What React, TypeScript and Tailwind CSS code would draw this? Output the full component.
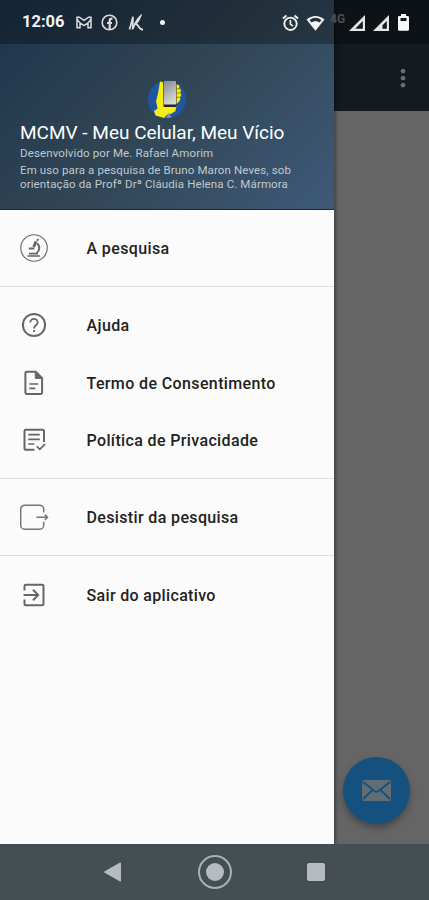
import type { ReactNode } from 'react';
import { MdMoreVert } from 'react-icons/md';

type MenuEntry = {
  label: string;
  icon: ReactNode;
  spacing: string;
};

const MicroscopeIcon = () => (
  <svg width="28" height="28" viewBox="0 0 28 28" fill="none" stroke="#666">
    <circle cx="14" cy="14" r="13.3" strokeWidth="1.1" />
    <path d="M7.5 22h12.5M9 19.6h9" strokeWidth="1.6" />
    <path d="M17 9.5c3.2 2.3 3 7.2-.5 9.7" strokeWidth="2" />
    <path d="M16 7.3l-2.3 5.7" strokeWidth="2.8" />
    <path d="M17 6.8L18.5 5M8.8 14.5h5.6" strokeWidth="1.8" />
  </svg>
);

const HelpIcon = () => (
  <svg width="28" height="28" viewBox="0 0 28 28" fill="none" stroke="#666" strokeWidth="1.8">
    <circle cx="14" cy="14" r="11.1" strokeWidth="2" />
    <path d="M10.3 11.6a3.7 3.7 0 1 1 7.4 0c0 2.7-3.7 2.7-3.7 5.8" />
    <path d="M14 18.9v2.2" />
  </svg>
);

const DocumentIcon = () => (
  <svg width="28" height="28" viewBox="0 0 28 28" fill="none" stroke="#666" strokeWidth="2">
    <path d="M6.3 2.8h9.5l6.3 6.3v14.3a1.5 1.5 0 0 1-1.5 1.5H6.9a1.5 1.5 0 0 1-1.5-1.5V4.3a1.5 1.5 0 0 1 1.5-1.5z" />
    <path d="M15.3 2.8v6.6h6.8z" fill="#666" strokeWidth="1" />
    <path d="M9.3 15h9M9.3 19.4h6" strokeWidth="1.7" />
  </svg>
);

const ChecklistIcon = () => (
  <svg width="28" height="28" viewBox="0 0 28 28" fill="none" stroke="#666" strokeWidth="2">
    <path d="M14.5 23.7H5.7a1.2 1.2 0 0 1-1.2-1.2V5a1.2 1.2 0 0 1 1.2-1.2h17.1A1.2 1.2 0 0 1 24 5v11" />
    <path d="M8.3 8.7h11.5M8.3 13.4h11.5M8.3 18h6" strokeWidth="1.7" />
    <path d="M16.8 20.3l3 3 5.2-5.2" strokeWidth="1.8" />
  </svg>
);

const LeaveIcon = () => (
  <svg width="29" height="28" viewBox="0 0 29 28" fill="none" stroke="#777" strokeWidth="1.5">
    <path d="M23.7 9.5V6.2a4 4 0 0 0-4-4H4.7a4 4 0 0 0-4 4v16a4 4 0 0 0 4 4h15a4 4 0 0 0 4-4v-3.4" />
    <path d="M16.4 14.3h11M24.8 11.6l2.7 2.7-2.7 2.7" />
  </svg>
);

const ExitIcon = () => (
  <svg width="28" height="28" viewBox="0 0 28 28" fill="none" stroke="#666" strokeWidth="2">
    <path d="M4.5 9.5V5a1.3 1.3 0 0 1 1.3-1.3h16.4A1.3 1.3 0 0 1 23.5 5v18a1.3 1.3 0 0 1-1.3 1.3H5.8A1.3 1.3 0 0 1 4.5 23v-4.5" />
    <path d="M3.5 14h14M13 8.8l5.2 5.2-5.2 5.2" />
  </svg>
);

const AppLogo = () => (
  <svg width="38" height="38" viewBox="0 0 38 38">
    <circle cx="19" cy="19.5" r="19" fill="#2055a4" />
    <path
      d="M12 1.5l3.4.7.3 16.5 2.3 6h8.5l2 1.5-1.2 5-4 2.5-4.3 1-3 3.3-8.5-2.5L6 31l3.6-2.5L8 21.5l2-8z"
      fill="#f5ee13"
    />
    <path d="M28 4l3.5 1.5-.5 3 2 1.3-.7 3 1 2-1.2 2.7.2 2.3-2.3 3L27 25z" fill="#f5ee13" />
    <path d="M28.5 8.8h4M28.5 13h4M28.5 17.3h4" stroke="#77781d" strokeWidth=".8" />
    <rect x="15.5" y="1" width="13" height="26" rx="1" fill="#24262a" />
    <rect x="16" y="1" width="12" height="23.5" fill="url(#phone)" />
    <path d="M18 38l3-5.5 2.4 5z" fill="#7996b9" />
    <defs>
      <linearGradient id="phone" x1="0" y1="0" x2="0.4" y2="1">
        <stop stopColor="#85888c" />
        <stop offset="1" stopColor="#d6d6d6" />
      </linearGradient>
    </defs>
  </svg>
);

const sections: MenuEntry[][] = [
  [{ label: 'A pesquisa', icon: <MicroscopeIcon />, spacing: 'tracking-[0.38px]' }],
  [
    { label: 'Ajuda', icon: <HelpIcon />, spacing: 'tracking-[0.38px]' },
    { label: 'Termo de Consentimento', icon: <DocumentIcon />, spacing: 'tracking-[0.38px]' },
    { label: 'Política de Privacidade', icon: <ChecklistIcon />, spacing: 'tracking-[0.36px]' },
  ],
  [{ label: 'Desistir da pesquisa', icon: <LeaveIcon />, spacing: 'tracking-[0.36px]' }],
  [{ label: 'Sair do aplicativo', icon: <ExitIcon />, spacing: 'tracking-[0.34px]' }],
];

function StatusBar() {
  return (
    <div className="absolute inset-x-0 top-0 z-20 flex h-11 items-center bg-black/30 pl-[22px] pr-[20px] pt-px text-white">
      <span className="w-[42px] text-[16.5px] font-bold leading-none text-gray-100">12:06</span>
      <svg className="ml-3" width="16" height="13" viewBox="0 0 16 13" fill="none" stroke="#ddd" strokeWidth="1.5">
        <path d="M1 11.8V1.2h2.3L8 4.4l4.7-3.2H15v10.6h-3V6.9L8 9.6 4 6.9v4.9zM1 3.2l3 3.7M15 3.2l-3 3.7" />
      </svg>
      <svg className="ml-[9px]" width="17" height="17" viewBox="0 0 17 17" fill="none" stroke="#ddd">
        <circle cx="8.5" cy="8.5" r="7.3" strokeWidth="1.6" />
        <path d="M8.7 15.5V6.6q0-2.2 2.8-2M6 9h5" strokeWidth="2.2" />
      </svg>
      <svg className="ml-[10px]" width="17" height="18" viewBox="0 0 17 18" fill="none" stroke="#ddd">
        <path d="M1.5 15.5L5 2.8L4.6 15.5" strokeWidth="1.7" />
        <path d="M4.7 14.5C7 9.5 9.5 5 12.3 2.5C11.3 5.5 10 7.5 7.6 10C10.6 9.5 10 15.3 15 15.8" strokeWidth="1.9" />
      </svg>
      <span className="ml-[15px] size-[5px] rounded-full bg-gray-100" />

      <svg className="ml-auto" width="17" height="18" viewBox="0 0 17 18" fill="none" stroke="#f3f3f3">
        <circle cx="8.5" cy="9.8" r="6.2" strokeWidth="1.9" />
        <path d="M1 4.5L4.5 1.6M16 4.5l-3.5-2.9" strokeWidth="2" />
        <path d="M8.4 6v4.1l2.6 2" strokeWidth="1.7" />
      </svg>
      <svg className="ml-[7px]" width="19" height="16" viewBox="0 0 19 16">
        <path d="M.5 4.6C6-.2 13-.2 18.5 4.6L9.5 15.7z" fill="#f5f5f5" />
        <path d="M3.5 5.1q6-4.5 12 0l-2 2.5q-4-3-8 0z" fill="#24313c" />
      </svg>
      <span className="ml-[5px] -mt-[7px] w-[17px] text-[12px] font-bold leading-none text-[#4b5053]">4G</span>
      <svg className="ml-[2px]" width="16" height="16" viewBox="0 0 16 16">
        <path d="M0 16L16 0v16z" fill="#e6e6e6" />
        <path d="M13.8 6v7.8H6.2z" fill="#101a22" />
      </svg>
      <svg className="ml-[8px]" width="16" height="16" viewBox="0 0 16 16">
        <path d="M0 16L16 0v16z" fill="#e6e6e6" />
        <path d="M13.8 6v7.8H9.5v-3.5z" fill="#101a22" />
      </svg>
      <svg className="ml-[9px]" width="11" height="17" viewBox="0 0 11 17">
        <path d="M3 0h5v2h1.5Q11 2 11 3.3v12.2q0 1.3-1.3 1.3H1.3Q0 16.8 0 15.5V3.3Q0 2 1.3 2H3z" fill="#f7f7f7" />
        <path d="M2.5 4h6v3h-6z" fill="#101a22" />
      </svg>
    </div>
  );
}

function Drawer() {
  return (
    <aside className="relative z-10 flex w-[334px] shrink-0 flex-col bg-[#fbfbfb] shadow-[1px_0_4px_rgba(0,0,0,0.5)]">
      <header className="flex h-[210px] flex-col border-b border-[#122944] bg-[linear-gradient(135deg,#1d344d_0%,#304554_48%,#3e5a78_100%)] pl-5 pt-[80px] text-[#c0c8cf]">
        <div className="ml-[128px] h-[38px]">
          <AppLogo />
        </div>
        <h1 className="mt-[3px] whitespace-nowrap text-[19px] leading-[23px] text-white">
          MCMV - Meu Celular, Meu Vício
        </h1>
        <p className="mt-[2px] whitespace-nowrap text-[11.5px] leading-[14px] tracking-[0.12px]">
          Desenvolvido por Me. Rafael Amorim
        </p>
        <p className="mt-[3px] whitespace-nowrap text-[11.5px] leading-[14px] tracking-[0.12px]">
          Em uso para a pesquisa de Bruno Maron Neves, sob
          <br />
          orientação da Profª Drª Cláudia Helena C. Mármora
        </p>
      </header>

      <nav>
        {sections.map((entries, index) => (
          <ul
            key={index}
            className="border-b border-[#dedede] py-[9.5px] last:border-b-0"
          >
            {entries.map((entry) => (
              <li key={entry.label} className="flex h-[57.3px] items-center pl-5">
                <span className="w-[66.5px] shrink-0">{entry.icon}</span>
                <span className={`whitespace-nowrap pt-[2px] text-[16px] font-medium text-[#222] ${entry.spacing}`}>
                  {entry.label}
                </span>
              </li>
            ))}
          </ul>
        ))}
      </nav>
    </aside>
  );
}

export default function App() {
  return (
    <div className="relative flex h-[900px] w-[429px] flex-col overflow-hidden bg-[#656565] font-[Roboto,sans-serif]">
      <StatusBar />

      <div className="flex h-[844px]">
        <Drawer />
        <main className="flex flex-1 flex-col">
          <div className="flex h-[111px] items-end justify-end bg-[#131b21] pb-[19px] pr-[12px]">
            <MdMoreVert size={28} color="#6b6f72" />
          </div>
          <button
            aria-label="Mensagem"
            className="mb-[20px] ml-[9px] mt-auto flex size-[67px] items-center justify-center rounded-full bg-[#15517f] shadow-[0_4px_7px_rgba(0,0,0,0.3)]"
          >
            <svg width="29" height="21" viewBox="0 0 29 21" fill="none">
              <rect width="29" height="21" rx="2" fill="#626c73" />
              <path d="M1 2l11.5 9q2 1.6 4 0L28 2M1 19l9.5-9M28 19l-9.5-9" stroke="#15517f" strokeWidth="1.8" />
            </svg>
          </button>
        </main>
      </div>

      <footer className="relative z-10 flex h-14 items-center bg-[#454e53] pl-[104px]">
        <svg width="17" height="20" viewBox="0 0 17 20" fill="#b4bcbf">
          <path d="M.7 9.2L15.5.7Q17 0 17 1.5v17q0 1.5-1.5.8L.7 10.8q-1-.8 0-1.6z" />
        </svg>
        <span className="ml-[77px] flex size-[34px] items-center justify-center rounded-full border-2 border-[#a9b1b5]">
          <span className="size-[18px] rounded-full bg-[#b4bcbf]" />
        </span>
        <span className="ml-[75px] size-[18px] rounded-[2px] bg-[#b4bcbf]" />
      </footer>
    </div>
  );
}
